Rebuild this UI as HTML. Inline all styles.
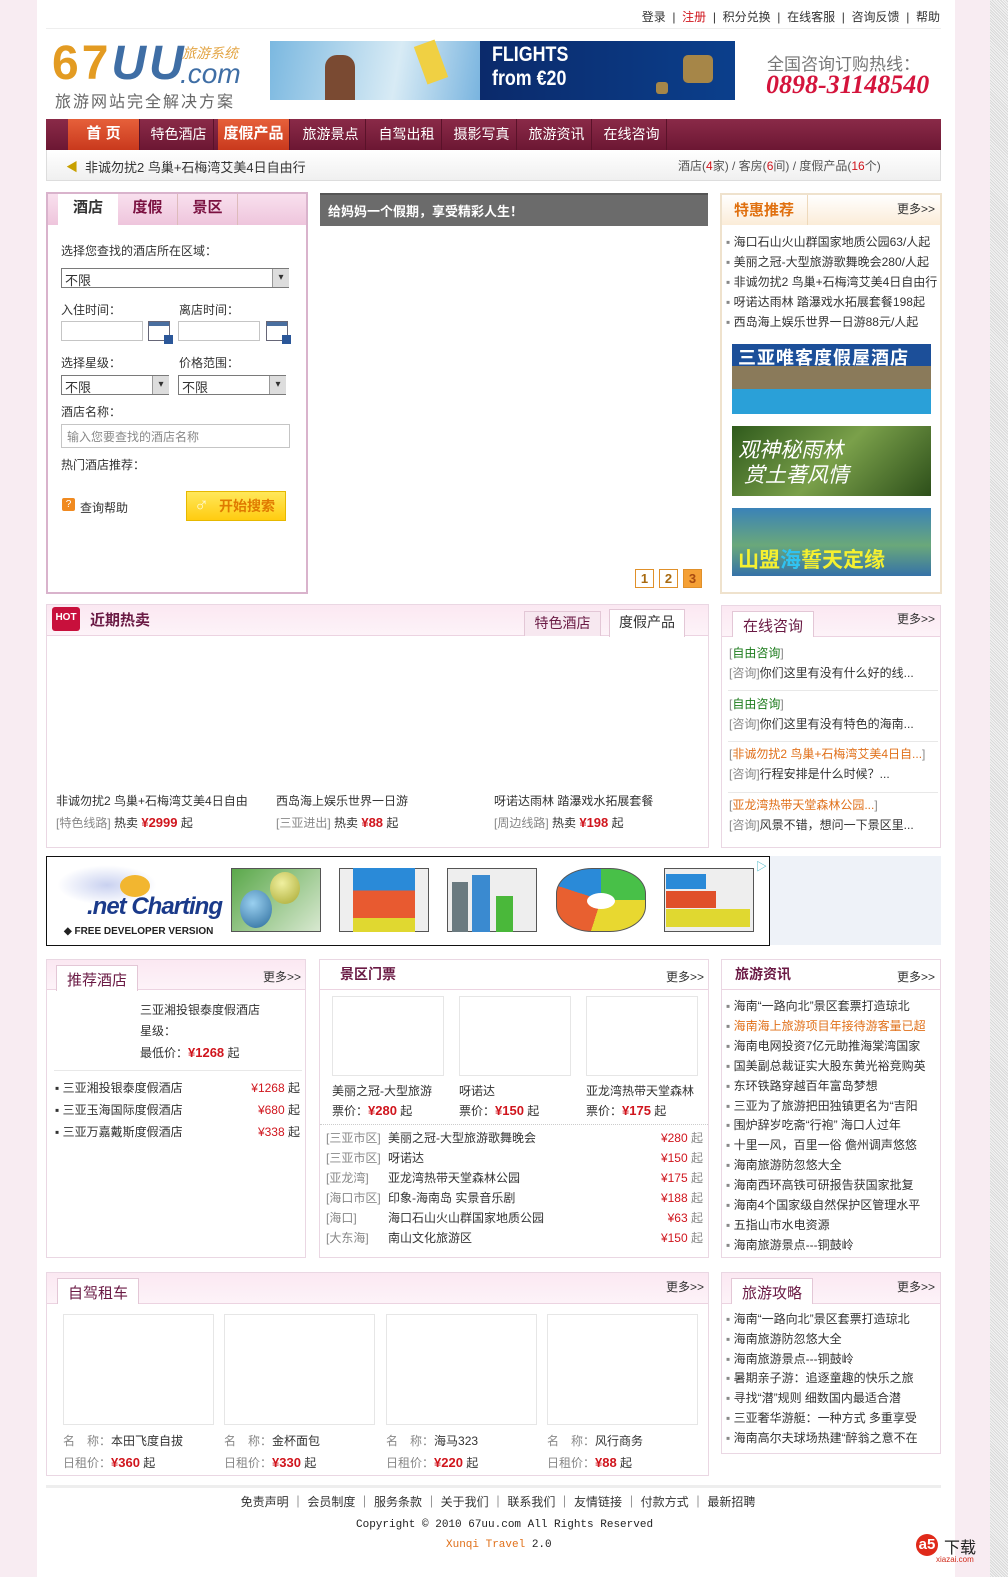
<!DOCTYPE html>
<html><head><meta charset="utf-8"><style>
*{margin:0;padding:0;box-sizing:border-box}
body{width:1008px;height:1577px;position:relative;background:#f8ecf2;font:12px "Liberation Sans","Noto Sans CJK SC",sans-serif;color:#333;overflow:hidden}
.a{position:absolute}
#page{position:absolute;left:37px;top:0;width:918px;height:1577px;background:#fff}
#sb{position:absolute;left:990px;top:0;width:18px;height:1577px;background:repeating-linear-gradient(45deg,#d8d8d8 0 1px,#f4f4f4 1px 2px)}
.box{position:absolute;border:1px solid #ead7e3;background:#fff}
.tab{position:absolute;top:6px;height:26px;background:#fff;border:1px solid #e3c7d6;border-bottom:none;font-size:15px;color:#6a1a44;padding:3px 10px 0}
.more{position:absolute;right:6px;top:8px;font-size:12px;color:#333}
.red{color:#d0151d}
.g{color:#888}
.img{position:absolute;border:1px solid #e6e6e6;background:#fff}
.sel{position:absolute;border:1px solid #7a7a7a;border-right:none;height:20px;background:#fff;font-size:13px;padding:1px 3px}
.sel:after{content:"▾";position:absolute;right:0;top:0;width:16px;height:18px;background:#ddd;border-left:1px solid #999;font-size:10px;text-align:center;line-height:18px}
.inp{position:absolute;border:1px solid #c5c5c5;height:20px;background:#fff}
.cal{position:absolute;width:22px;height:20px;background:linear-gradient(#4a6fa0 0 4px,#fff 4px);border:1px solid #667;}
.cal:after{content:"";position:absolute;right:-4px;bottom:-4px;width:9px;height:9px;background:#2b5799}
.nav span{position:absolute;top:0;height:31px;line-height:30px;color:#fff;font-size:14px;text-align:center;border-right:1px solid #5a1229}
</style></head><body>
<div id="page"></div>
<div id="sb"></div>

<div class="a" style="right:68px;top:8px;font-size:12px;color:#333;white-space:nowrap">登录 &nbsp;| &nbsp;<span class="red">注册</span> &nbsp;| &nbsp;积分兑换 &nbsp;| &nbsp;在线客服 &nbsp;| &nbsp;咨询反馈 &nbsp;| &nbsp;帮助</div>
<div class="a" style="left:46px;top:28px;width:895px;height:1px;background:#eee"></div>

<div class="a" style="left:52px;top:36px;font:bold 48px 'Liberation Sans',sans-serif;color:#e39b22;letter-spacing:3px">67<span style="color:#3f6ea5;font-style:italic">UU</span></div>
<div class="a" style="left:182px;top:43px;font-size:14px;color:#e3a545;font-style:italic">旅游系统</div>
<div class="a" style="left:180px;top:58px;font:28px 'Liberation Sans',sans-serif;color:#3f6ea5;font-style:italic">.com</div>
<div class="a" style="left:55px;top:88px;font-size:16px;color:#666;letter-spacing:2px">旅游网站完全解决方案</div>

<div class="a" style="left:270px;top:41px;width:210px;height:59px;background:linear-gradient(100deg,#7bb8e0,#d8ebf5 60%,#79b4df)"></div>
<div class="a" style="left:325px;top:55px;width:30px;height:45px;background:#7a4a32;border-radius:12px 12px 0 0"></div>
<div class="a" style="left:420px;top:42px;width:22px;height:40px;background:#f0d043;transform:rotate(-20deg)"></div>
<div class="a" style="left:480px;top:41px;width:255px;height:59px;background:linear-gradient(90deg,#0b2a6b,#0b3f8c)"></div>
<div class="a" style="left:492px;top:43px;color:#fff;font:bold 21px 'Liberation Sans',sans-serif;line-height:24px;transform:scaleX(.85);transform-origin:left">FLIGHTS<br>from €20</div>
<div class="a" style="left:683px;top:55px;width:30px;height:28px;background:#a68648;border-radius:5px"></div>
<div class="a" style="left:656px;top:82px;width:12px;height:12px;background:#a68648;border-radius:3px"></div>

<div class="a" style="left:767px;top:50px;font-size:17px;color:#777">全国咨询订购热线：</div>
<div class="a" style="left:766px;top:70px;font:italic bold 26px 'Liberation Serif',serif;color:#d4143c">0898-31148540</div>

<div class="a nav" style="left:46px;top:119px;width:895px;height:31px;background:linear-gradient(#8a2a48,#6c1733)">
 <span style="left:0;width:22px;border:none"></span>
 <span style="left:22px;width:72px;background:linear-gradient(#e6603a,#c9391d);font-weight:bold;font-size:15px">首 页</span>
 <span style="left:98px;width:70px">特色酒店</span>
 <span style="left:172px;width:72px;background:linear-gradient(#e6603a,#c9391d);font-weight:bold;font-size:15px">度假产品</span>
 <span style="left:250px;width:70px">旅游景点</span>
 <span style="left:326px;width:70px">自驾出租</span>
 <span style="left:401px;width:70px">摄影写真</span>
 <span style="left:476px;width:70px">旅游资讯</span>
 <span style="left:551px;width:70px">在线咨询</span>
</div>
<div class="a" style="left:46px;top:150px;width:895px;height:31px;background:linear-gradient(#fff,#f0f0f0);border:1px solid #ddd;border-top:none"></div>
<div class="a" style="left:66px;top:158px;font-size:12px;color:#c8a000">◀︎</div>
<div class="a" style="left:85px;top:157px;font-size:13px;color:#333">非诚勿扰2 鸟巢+石梅湾艾美4日自由行</div>
<div class="a" style="left:678px;top:157px;font-size:12px;color:#555">酒店(<span class="red">4</span>家) / 客房(<span class="red">6</span>间) / 度假产品(<span class="red">16</span>个)</div>

<div class="a" style="left:46px;top:192px;width:262px;height:402px;border:2px solid #d9b3cc;background:#fff"></div>
<div class="a" style="left:48px;top:194px;width:258px;height:31px;background:linear-gradient(#f9e0ee,#eec5dc)"></div>
<div class="a" style="left:58px;top:194px;width:60px;height:32px;background:#fff;font-size:15px;text-align:center;line-height:28px;color:#333;font-weight:bold">酒店</div>
<div class="a" style="left:118px;top:194px;width:60px;height:31px;font-size:15px;text-align:center;line-height:28px;color:#7a1040;font-weight:bold;border-right:1px solid #dbb">度假</div>
<div class="a" style="left:178px;top:194px;width:60px;height:31px;font-size:15px;text-align:center;line-height:28px;color:#7a1040;font-weight:bold;border-right:1px solid #dbb">景区</div>
<div class="a" style="left:61px;top:242px">选择您查找的酒店所在区域：</div>
<div class="sel" style="left:61px;top:268px;width:228px">不限</div>
<div class="a" style="left:61px;top:301px">入住时间：</div>
<div class="a" style="left:179px;top:301px">离店时间：</div>
<div class="inp" style="left:61px;top:321px;width:82px"></div>
<div class="cal" style="left:148px;top:321px"></div>
<div class="inp" style="left:178px;top:321px;width:82px"></div>
<div class="cal" style="left:266px;top:321px"></div>
<div class="a" style="left:61px;top:354px">选择星级：</div>
<div class="a" style="left:179px;top:354px">价格范围：</div>
<div class="sel" style="left:61px;top:375px;width:108px">不限</div>
<div class="sel" style="left:178px;top:375px;width:108px">不限</div>
<div class="a" style="left:61px;top:403px">酒店名称：</div>
<div class="inp" style="left:61px;top:424px;width:229px;height:24px;color:#888;padding:3px 5px;font-size:12px">输入您要查找的酒店名称</div>
<div class="a" style="left:61px;top:456px">热门酒店推荐：</div>
<div class="a" style="left:62px;top:498px;width:13px;height:13px;background:#f08a20;color:#fff;font-size:10px;text-align:center;line-height:13px;border-radius:2px">?</div>
<div class="a" style="left:80px;top:499px">查询帮助</div>
<div class="a" style="left:186px;top:491px;width:100px;height:30px;background:linear-gradient(#ffe85a,#ffcc10);border:1px solid #e6b800;color:#e07a00;font-size:14px;font-weight:bold;line-height:28px;padding-left:32px">开始搜索</div>
<div class="a" style="left:194px;top:494px;color:#fff8d0;font-size:20px;font-weight:bold">♂</div>

<div class="a" style="left:320px;top:193px;width:388px;height:33px;background:#6b6b6b;border-top:2px solid #555;color:#fff;font-weight:bold;font-size:13px;padding:6px 8px">给妈妈一个假期，享受精彩人生！</div>
<div class="a" style="left:635px;top:569px;width:19px;height:19px;border:1px solid #e0902a;background:#fff;color:#a86a10;text-align:center;line-height:17px;font-weight:bold;font-size:13px">1</div>
<div class="a" style="left:659px;top:569px;width:19px;height:19px;border:1px solid #e0902a;background:#fff;color:#a86a10;text-align:center;line-height:17px;font-weight:bold;font-size:13px">2</div>
<div class="a" style="left:683px;top:569px;width:19px;height:19px;border:1px solid #e0902a;background:#f5a035;color:#a84a10;text-align:center;line-height:17px;font-weight:bold;font-size:13px">3</div>

<div class="a" style="left:720px;top:193px;width:222px;height:401px;border:2px solid #efe2cd;background:#fff"></div>
<div class="a" style="left:722px;top:195px;width:218px;height:30px;background:linear-gradient(#fff,#fbecd8)"></div>
<div class="a" style="left:722px;top:195px;width:86px;height:30px;border-right:1px solid #eed9bb;color:#e0700f;font-size:15px;font-weight:bold;padding:4px 0 0 12px">特惠推荐</div>
<div class="a" style="left:897px;top:200px">更多&gt;&gt;</div>
<div class="a" style="left:726px;top:232px;line-height:20px;font-size:12px;white-space:nowrap">
<div><span class="g">▪</span> 海口石山火山群国家地质公园63/人起</div>
<div><span class="g">▪</span> 美丽之冠-大型旅游歌舞晚会280/人起</div>
<div><span class="g">▪</span> 非诚勿扰2 鸟巢+石梅湾艾美4日自由行</div>
<div><span class="g">▪</span> 呀诺达雨林 踏瀑戏水拓展套餐198起</div>
<div><span class="g">▪</span> 西岛海上娱乐世界一日游88元/人起</div></div>
<div class="a" style="left:732px;top:344px;width:199px;height:70px;background:linear-gradient(#1c4f99 0 22px,#8a7a5a 22px 45px,#2aa0d8 45px)"></div>
<div class="a" style="left:738px;top:344px;color:#fff;font-size:18px;font-weight:bold;letter-spacing:1px">三亚唯客度假屋酒店</div>
<div class="a" style="left:732px;top:426px;width:199px;height:70px;background:linear-gradient(135deg,#2f5a1c,#7aa04a 50%,#2d4f1a)"></div>
<div class="a" style="left:738px;top:438px;color:#fff;font-size:21px;font-style:italic;line-height:25px">观神秘雨林<br>&nbsp;赏土著风情</div>
<div class="a" style="left:732px;top:508px;width:199px;height:68px;background:linear-gradient(#3a82b8,#6aa87a 55%,#3572a8)"></div>
<div class="a" style="left:738px;top:544px;color:#f5f030;font-size:21px;font-weight:bold">山盟<span style="color:#31c2f0">海</span>誓天定缘</div>

<div class="box" style="left:46px;top:604px;width:663px;height:244px"></div>
<div class="a" style="left:47px;top:605px;width:661px;height:31px;background:linear-gradient(#fbe8f2,#fdf3f8);border-bottom:1px solid #ecd3e1"></div>
<div class="a" style="left:52px;top:607px;width:28px;height:24px;background:#c8103c;color:#fff;font-size:10px;font-weight:bold;text-align:center;line-height:22px;border-radius:3px">HOT</div>
<div class="a" style="left:90px;top:609px;font-size:15px;color:#6a1a44;font-weight:bold">近期热卖</div>
<div class="a" style="left:524px;top:611px;width:77px;height:25px;background:#f7e8f0;border:1px solid #e3c7d6;border-bottom:none;color:#6a1a44;font-size:14px;text-align:center;line-height:22px">特色酒店</div>
<div class="a" style="left:609px;top:609px;width:76px;height:28px;background:#fff;border:1px solid #e3c7d6;border-bottom:none;color:#333;font-size:14px;text-align:center;line-height:24px">度假产品</div>
<div class="a" style="left:56px;top:792px;font-size:12px">非诚勿扰2 鸟巢+石梅湾艾美4日自由</div>
<div class="a" style="left:56px;top:814px;font-size:12px"><span class="g">[特色线路]</span> 热卖 <b class="red" style="font-size:13px">¥2999</b> 起</div>
<div class="a" style="left:276px;top:792px;font-size:12px">西岛海上娱乐世界一日游</div>
<div class="a" style="left:276px;top:814px;font-size:12px"><span class="g">[三亚进出]</span> 热卖 <b class="red" style="font-size:13px">¥88</b> 起</div>
<div class="a" style="left:494px;top:792px;font-size:12px">呀诺达雨林 踏瀑戏水拓展套餐</div>
<div class="a" style="left:494px;top:814px;font-size:12px"><span class="g">[周边线路]</span> 热卖 <b class="red" style="font-size:13px">¥198</b> 起</div>

<div class="box" style="left:721px;top:605px;width:220px;height:243px"></div>
<div class="a" style="left:722px;top:606px;width:218px;height:31px;background:linear-gradient(#fbe8f2,#fdf3f8);border-bottom:1px solid #ecd3e1"></div>
<div class="tab" style="left:732px;top:611px">在线咨询</div>
<div class="a" style="left:897px;top:610px">更多&gt;&gt;</div>
<div class="a" style="left:729px;top:643px;line-height:20px;font-size:12px;white-space:nowrap">
<div><span class="g">[</span><span style="color:#1a7a1a">自由咨询</span><span class="g">]</span></div>
<div><span class="g">[咨询]</span>你们这里有没有什么好的线...</div></div>
<div class="a" style="left:728px;top:690px;width:210px;height:1px;background:#e8e8e8"></div>
<div class="a" style="left:729px;top:694px;line-height:20px;font-size:12px;white-space:nowrap">
<div><span class="g">[</span><span style="color:#1a7a1a">自由咨询</span><span class="g">]</span></div>
<div><span class="g">[咨询]</span>你们这里有没有特色的海南...</div></div>
<div class="a" style="left:728px;top:741px;width:210px;height:1px;background:#e8e8e8"></div>
<div class="a" style="left:729px;top:744px;line-height:20px;font-size:12px;white-space:nowrap">
<div><span class="g">[</span><span style="color:#e0701a">非诚勿扰2 鸟巢+石梅湾艾美4日自...</span><span class="g">]</span></div>
<div><span class="g">[咨询]</span>行程安排是什么时候？...</div></div>
<div class="a" style="left:728px;top:792px;width:210px;height:1px;background:#e8e8e8"></div>
<div class="a" style="left:729px;top:795px;line-height:20px;font-size:12px;white-space:nowrap">
<div><span class="g">[</span><span style="color:#e0701a">亚龙湾热带天堂森林公园...</span><span class="g">]</span></div>
<div><span class="g">[咨询]</span>风景不错，想问一下景区里...</div></div>

<div class="a" style="left:769px;top:856px;width:172px;height:89px;background:#eef2f8"></div>
<div class="a" style="left:46px;top:856px;width:724px;height:90px;border:1px solid #111;background:#fff"></div>
<div class="a" style="left:57px;top:865px;width:100px;height:40px;background:radial-gradient(ellipse at 50% 50%,#c9d1f0,#fff 70%)"></div>
<div class="a" style="left:120px;top:875px;width:30px;height:22px;background:#f2b630;border-radius:50%"></div>
<div class="a" style="left:87px;top:893px;font:italic bold 24px 'Liberation Sans',sans-serif;color:#1a3a8a;letter-spacing:-1px">.net Charting</div>
<div class="a" style="left:64px;top:926px;font:bold 10px 'Liberation Sans',sans-serif;color:#222">◆ FREE DEVELOPER VERSION</div>
<div class="a" style="left:231px;top:868px;width:90px;height:64px;border:1px solid #555;background:linear-gradient(135deg,#5aa84a,#d8e8d0)"></div>
<div class="a" style="left:240px;top:890px;width:32px;height:38px;border-radius:50%;background:radial-gradient(circle at 40% 35%,#9ad0f0,#2a6a9a)"></div>
<div class="a" style="left:270px;top:872px;width:30px;height:32px;border-radius:50%;background:radial-gradient(circle at 40% 35%,#f0f0a0,#a8a830)"></div>
<div class="a" style="left:339px;top:868px;width:90px;height:64px;border:1px solid #555;background:#eee"></div>
<div class="a" style="left:353px;top:868px;width:62px;height:64px;background:linear-gradient(#2a8ad8 0 35%,#e85a30 35% 78%,#e0d830 78%)"></div>
<div class="a" style="left:447px;top:868px;width:90px;height:64px;border:1px solid #555;background:#eee"></div>
<div class="a" style="left:452px;top:882px;width:16px;height:50px;background:#6a7a80"></div>
<div class="a" style="left:472px;top:875px;width:18px;height:57px;background:#3a8ad0"></div>
<div class="a" style="left:496px;top:896px;width:17px;height:36px;background:#4ab83a"></div>
<div class="a" style="left:556px;top:868px;width:90px;height:64px;border:1px solid #555;background:conic-gradient(#48c048 0 25%,#e8d830 25% 55%,#e86030 55% 80%,#2a8ad8 80%);border-radius:40%"></div>
<div class="a" style="left:587px;top:893px;width:28px;height:16px;background:#fff;border-radius:50%"></div>
<div class="a" style="left:664px;top:868px;width:90px;height:64px;border:1px solid #555;background:#eee"></div>
<div class="a" style="left:666px;top:874px;width:40px;height:15px;background:#2a8ad8"></div>
<div class="a" style="left:666px;top:891px;width:50px;height:17px;background:#e0502a"></div>
<div class="a" style="left:666px;top:909px;width:84px;height:18px;background:#e0d830"></div>
<div class="a" style="left:756px;top:858px;color:#3ab0c0;font-size:11px">▷</div>

<div class="box" style="left:46px;top:959px;width:260px;height:299px"></div>
<div class="a" style="left:47px;top:960px;width:258px;height:30px;background:linear-gradient(#fbe8f2,#fdf3f8);border-bottom:1px solid #ecd3e1"></div>
<div class="tab" style="left:56px;top:965px">推荐酒店</div>
<div class="a" style="left:263px;top:968px">更多&gt;&gt;</div>
<div class="a" style="left:140px;top:1000px;line-height:21px">三亚湘投银泰度假酒店<br>星级：<br>最低价：<b class="red" style="font-size:13px">¥1268</b> 起</div>
<div class="a" style="left:54px;top:1070px;width:248px;height:1px;background:#e8e8e8"></div>
<div class="a" style="left:55px;top:1077px;width:245px;line-height:22px">
<div>▪ 三亚湘投银泰度假酒店<span style="float:right"><span class="red">¥1268</span> 起</span></div>
<div>▪ 三亚玉海国际度假酒店<span style="float:right"><span class="red">¥680</span> 起</span></div>
<div>▪ 三亚万嘉戴斯度假酒店<span style="float:right"><span class="red">¥338</span> 起</span></div></div>

<div class="box" style="left:319px;top:959px;width:390px;height:299px"></div>
<div class="a" style="left:320px;top:960px;width:388px;height:30px;background:#fff;border-bottom:1px solid #ecd3e1"></div>
<div class="a" style="left:340px;top:964px;font-size:14px;color:#6a1a44;font-weight:bold">景区门票</div>
<div class="a" style="left:666px;top:968px">更多&gt;&gt;</div>
<div class="img" style="left:332px;top:996px;width:112px;height:80px"></div>
<div class="img" style="left:459px;top:996px;width:112px;height:80px"></div>
<div class="img" style="left:586px;top:996px;width:112px;height:80px"></div>
<div class="a" style="left:332px;top:1081px;line-height:20px">美丽之冠-大型旅游<br>票价：<b class="red" style="font-size:13px">¥280</b> 起</div>
<div class="a" style="left:459px;top:1081px;line-height:20px">呀诺达<br>票价：<b class="red" style="font-size:13px">¥150</b> 起</div>
<div class="a" style="left:586px;top:1081px;line-height:20px">亚龙湾热带天堂森林<br>票价：<b class="red" style="font-size:13px">¥175</b> 起</div>
<div class="a" style="left:320px;top:1124px;width:388px;border-top:1px dotted #ccc"></div>
<div class="a" style="left:326px;top:1128px;width:377px;line-height:20px">
<div><span class="g" style="display:inline-block;width:62px">[三亚市区]</span>美丽之冠-大型旅游歌舞晚会<span style="float:right"><span class="red">¥280</span> <span class="g">起</span></span></div>
<div><span class="g" style="display:inline-block;width:62px">[三亚市区]</span>呀诺达<span style="float:right"><span class="red">¥150</span> <span class="g">起</span></span></div>
<div><span class="g" style="display:inline-block;width:62px">[亚龙湾]</span>亚龙湾热带天堂森林公园<span style="float:right"><span class="red">¥175</span> <span class="g">起</span></span></div>
<div><span class="g" style="display:inline-block;width:62px">[海口市区]</span>印象-海南岛 实景音乐剧<span style="float:right"><span class="red">¥188</span> <span class="g">起</span></span></div>
<div><span class="g" style="display:inline-block;width:62px">[海口]</span>海口石山火山群国家地质公园<span style="float:right"><span class="red">¥63</span> <span class="g">起</span></span></div>
<div><span class="g" style="display:inline-block;width:62px">[大东海]</span>南山文化旅游区<span style="float:right"><span class="red">¥150</span> <span class="g">起</span></span></div></div>

<div class="box" style="left:721px;top:959px;width:220px;height:299px"></div>
<div class="a" style="left:722px;top:960px;width:218px;height:30px;border-bottom:1px solid #ecd3e1"></div>
<div class="a" style="left:735px;top:964px;font-size:14px;color:#6a1a44;font-weight:bold">旅游资讯</div>
<div class="a" style="left:897px;top:968px">更多&gt;&gt;</div>
<div class="a" style="left:726px;top:997px;line-height:19.9px;white-space:nowrap">
<div><span class="g">▪</span> 海南“一路向北”景区套票打造琼北</div>
<div style="color:#e0701a"><span class="g">▪</span> 海南海上旅游项目年接待游客量已超</div>
<div><span class="g">▪</span> 海南电网投资7亿元助推海棠湾国家</div>
<div><span class="g">▪</span> 国美副总裁证实大股东黄光裕竞购英</div>
<div><span class="g">▪</span> 东环铁路穿越百年富岛梦想</div>
<div><span class="g">▪</span> 三亚为了旅游把田独镇更名为“吉阳</div>
<div><span class="g">▪</span> 围炉辞岁吃斋“行袍” 海口人过年</div>
<div><span class="g">▪</span> 十里一风，百里一俗 儋州调声悠悠</div>
<div><span class="g">▪</span> 海南旅游防忽悠大全</div>
<div><span class="g">▪</span> 海南西环高铁可研报告获国家批复</div>
<div><span class="g">▪</span> 海南4个国家级自然保护区管理水平</div>
<div><span class="g">▪</span> 五指山市水电资源</div>
<div><span class="g">▪</span> 海南旅游景点---铜鼓岭</div></div>

<div class="box" style="left:46px;top:1272px;width:663px;height:204px"></div>
<div class="a" style="left:47px;top:1273px;width:661px;height:31px;background:linear-gradient(#fbe8f2,#fdf3f8);border-bottom:1px solid #ecd3e1"></div>
<div class="tab" style="left:57px;top:1278px">自驾租车</div>
<div class="a" style="left:666px;top:1278px">更多&gt;&gt;</div>
<div class="img" style="left:63px;top:1314px;width:151px;height:111px"></div>
<div class="img" style="left:224px;top:1314px;width:151px;height:111px"></div>
<div class="img" style="left:386px;top:1314px;width:151px;height:111px"></div>
<div class="img" style="left:547px;top:1314px;width:151px;height:111px"></div>
<div class="a" style="left:63px;top:1430px;line-height:22px"><span class="g">名　称：</span>本田飞度自拔<br><span class="g">日租价：</span><b class="red" style="font-size:13px">¥360</b> 起</div>
<div class="a" style="left:224px;top:1430px;line-height:22px"><span class="g">名　称：</span>金杯面包<br><span class="g">日租价：</span><b class="red" style="font-size:13px">¥330</b> 起</div>
<div class="a" style="left:386px;top:1430px;line-height:22px"><span class="g">名　称：</span>海马323<br><span class="g">日租价：</span><b class="red" style="font-size:13px">¥220</b> 起</div>
<div class="a" style="left:547px;top:1430px;line-height:22px"><span class="g">名　称：</span>风行商务<br><span class="g">日租价：</span><b class="red" style="font-size:13px">¥88</b> 起</div>

<div class="box" style="left:721px;top:1272px;width:220px;height:182px"></div>
<div class="a" style="left:722px;top:1273px;width:218px;height:31px;background:linear-gradient(#fbe8f2,#fdf3f8);border-bottom:1px solid #ecd3e1"></div>
<div class="tab" style="left:731px;top:1278px">旅游攻略</div>
<div class="a" style="left:897px;top:1278px">更多&gt;&gt;</div>
<div class="a" style="left:726px;top:1310px;line-height:19.8px;white-space:nowrap">
<div><span class="g">▪</span> 海南“一路向北”景区套票打造琼北</div>
<div><span class="g">▪</span> 海南旅游防忽悠大全</div>
<div><span class="g">▪</span> 海南旅游景点---铜鼓岭</div>
<div><span class="g">▪</span> 暑期亲子游：追逐童趣的快乐之旅</div>
<div><span class="g">▪</span> 寻找“潜”规则 细数国内最适合潜</div>
<div><span class="g">▪</span> 三亚奢华游艇：一种方式 多重享受</div>
<div><span class="g">▪</span> 海南高尔夫球场热建“醉翁之意不在</div></div>

<div class="a" style="left:46px;top:1485px;width:895px;height:3px;background:#eee"></div>
<div class="a" style="left:0;width:1008px;top:1494px;text-align:center;font-size:12px;line-height:16px"><span style="position:relative;left:-6px">免责声明 ｜ 会员制度 ｜ 服务条款 ｜ 关于我们 ｜ 联系我们 ｜ 友情链接 ｜ 付款方式 ｜ 最新招聘</span></div>
<div class="a" style="left:356px;top:1519px;font:11px 'Liberation Mono',monospace;color:#222">Copyright © 2010 67uu.com All Rights Reserved</div>
<div class="a" style="left:446px;top:1539px;font:11px 'Liberation Mono',monospace;color:#222"><span style="color:#e0701a">Xunqi Travel</span> 2.0</div>
<div class="a" style="left:916px;top:1534px;width:22px;height:22px;border-radius:50%;background:#e02a1a;color:#fff;font-weight:bold;font-size:15px;text-align:center;line-height:22px">a5</div>
<div class="a" style="left:944px;top:1534px;font-size:16px;color:#222">下载</div>
<div class="a" style="left:936px;top:1555px;font-size:8px;color:#d02a1a">xiazai.com</div>
</body></html>
